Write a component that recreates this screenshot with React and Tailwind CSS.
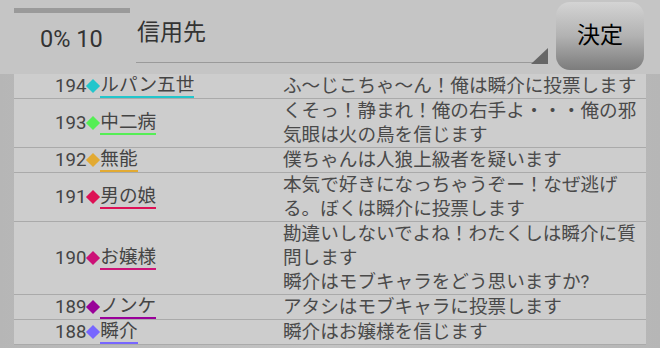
import React from "react";

const rows = [
    { no: 194, name: "ルパン五世", color: "#22c6cc", lines: ["ふ〜じこちゃ〜ん！俺は瞬介に投票します"] },
    { no: 193, name: "中二病", color: "#55ee55", lines: ["くそっ！静まれ！俺の右手よ・・・俺の邪気眼は火の鳥を信じます"] },
    { no: 192, name: "無能", color: "#e2aa33", lines: ["僕ちゃんは人狼上級者を疑います"] },
    { no: 191, name: "男の娘", color: "#dd1155", lines: ["本気で好きになっちゃうぞー！なぜ逃げる。ぼくは瞬介に投票します"] },
    { no: 190, name: "お嬢様", color: "#cc1177", lines: ["勘違いしないでよね！わたくしは瞬介に質問します", "瞬介はモブキャラをどう思いますか?"] },
    { no: 189, name: "ノンケ", color: "#990099", lines: ["アタシはモブキャラに投票します"] },
    { no: 188, name: "瞬介", color: "#7766ff", lines: ["瞬介はお嬢様を信じます"] },
];

const VoteRow = ({ row }) => {
    return (
        <div className="grid grid-cols-[269px_1fr] border-b border-[#aaaaaa]">
            <div className="flex items-center pl-[41px] text-[#444444]">
                <span className="leading-[24px]">{row.no}</span>
                <span className="w-[14px] h-[14px] flex items-center justify-center">
                    <span className="block w-[10px] h-[10px] rotate-45" style={{ backgroundColor: row.color }} />
                </span>
                <span className="leading-[22px] border-b-2" style={{ borderColor: row.color }}>
                    {row.name}
                </span>
            </div>
            <div className="leading-[24px] text-[#4a4a4a] pr-[4px]">
                {row.lines.map((line, i) => (
                    <div key={i}>{line}</div>
                ))}
            </div>
        </div>
    );
};

const App = () => {
    return (
        <div className="w-[660px] h-[348px] overflow-hidden bg-[#c5c5c5] font-['Roboto','Noto_Sans_CJK_JP',sans-serif] text-[18.6px]">
            {/* header */}
            <div className="flex h-[74px] pl-[14px] pr-[16px] pt-[2px]">
                <div className="w-[122px] flex flex-col">
                    <div className="mt-[6px] w-[116px] h-[5px] bg-[#9a9a9a]" />
                    <div className="mt-[13px] pl-[26px] text-[23.5px] leading-[26px] text-[#333333]">0% 10</div>
                </div>
                <div className="w-[412px] h-[61px] flex flex-col border-b border-[#9a9a9a]">
                    <div className="pt-[16px] pl-[1px] text-[23px] leading-[30px] text-[#333333]">信用先</div>
                    <div className="flex-1 flex justify-end items-end">
                        <svg width="17" height="16" viewBox="0 0 17 16" className="block">
                            <polygon points="17,0 17,16 0,16" fill="#666666" />
                        </svg>
                    </div>
                </div>
                <button
                    type="button"
                    className="ml-[8px] w-[88px] h-[68px] rounded-[14px] bg-linear-to-b from-[#d4d4d4] via-[#b2b2b2] to-[#7c7c7c] text-[23px] text-black flex items-center justify-center"
                >
                    決定
                </button>
            </div>

            {/* vote list */}
            <div className="bg-linear-to-r from-[#b6b6b6] via-[#c4c4c4] to-[#b6b6b6] px-[14px] h-[274px]">
                <div className="bg-[#cdcdcd]">
                    {rows.map(row => (
                        <VoteRow key={row.no} row={row} />
                    ))}
                </div>
            </div>
        </div>
    );
};

export default App;
